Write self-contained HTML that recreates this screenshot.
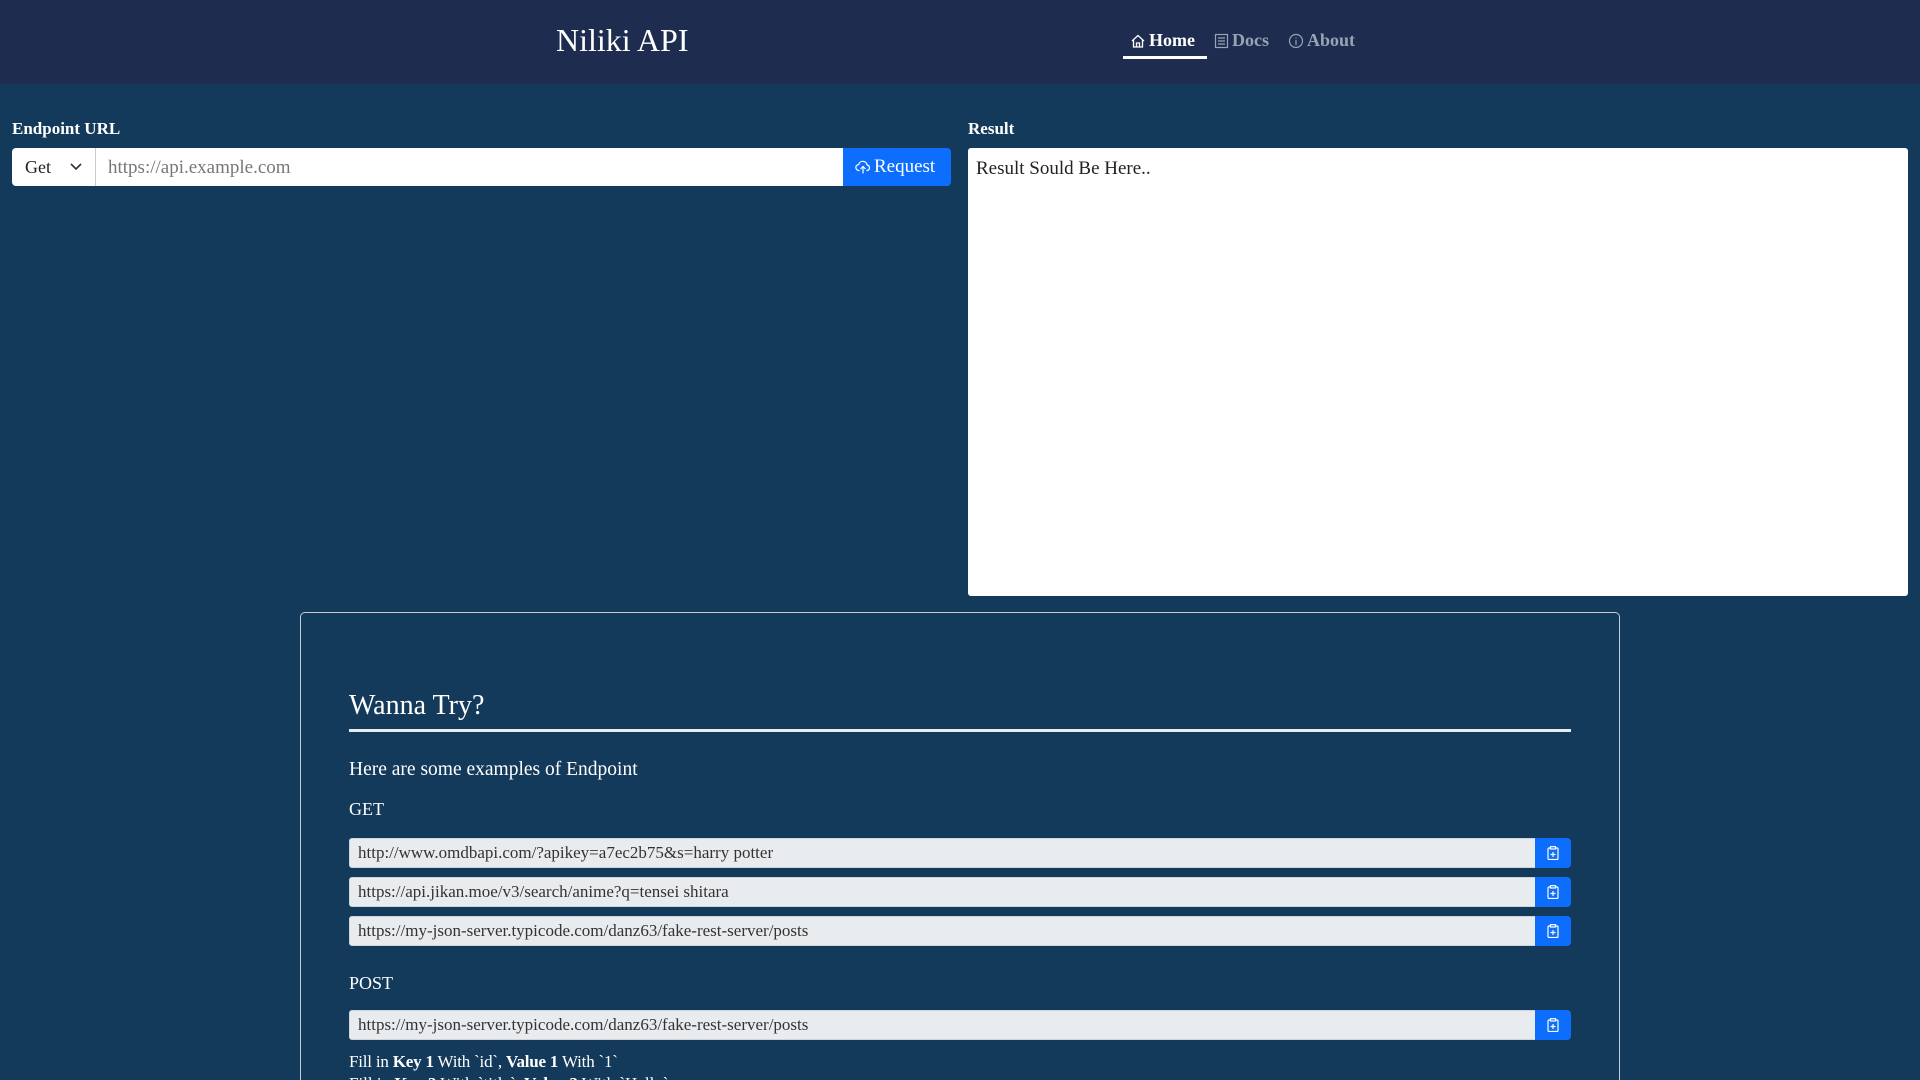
<!DOCTYPE html>
<html><head><meta charset="utf-8"><style>
*{box-sizing:border-box;margin:0;padding:0}
html,body{width:1920px;height:1080px;overflow:hidden}
body{background:#143a5b;font-family:"Liberation Serif","DejaVu Serif",serif;color:#fff;position:relative}
.hdr{position:absolute;left:0;top:0;width:1920px;height:84px;background:#1e2d4f}
.title{position:absolute;left:556px;top:22px;font-size:32px}
.nav{position:absolute;top:30px;font-size:18px;font-weight:bold;display:flex;align-items:center;gap:3px}
.abs{position:absolute}
.lbl{font-size:17px;font-weight:bold}
.inp{background:#e9ecef;border:1px solid #ced4da;color:#333;font-size:17px;height:30px;border-radius:3px 0 0 3px;padding:4px 8px;left:349px;width:1187px}
.cb{background:#0d6efd;left:1535px;width:36px;height:30px;border-radius:0 4px 4px 0;display:flex;align-items:center;justify-content:center}
</style></head><body>
<div class="hdr">
<div class="title">Niliki API</div>
<div class="nav" style="left:1130px;color:#fff"><svg width="16" height="16" viewBox="0 0 16 16" fill="none" stroke="#fff" stroke-width="1.3"><path d="M2 8L8 2.5 14 8M3.5 6.8V14h9V6.8M6.5 14v-4h3v4"/></svg>Home</div>
<div class="abs" style="left:1123px;top:56px;width:84px;height:3px;background:#fff"></div>
<div class="nav" style="left:1214px;color:#9aa3b3"><svg width="15" height="16" viewBox="0 0 15 16" fill="none" stroke="#9aa3b3" stroke-width="1.2"><rect x="1.5" y="1.5" width="12" height="13"/><path d="M4 5h7M4 8h7M4 11h7"/></svg>Docs</div>
<div class="nav" style="left:1288px;color:#9aa3b3"><svg width="16" height="16" viewBox="0 0 16 16" fill="none" stroke="#9aa3b3" stroke-width="1.2"><circle cx="8" cy="8" r="6.5"/><path d="M8 7v5M8 4.5v1"/></svg>About</div>
</div>

<div class="abs lbl" style="left:12px;top:119px">Endpoint URL</div>
<div class="abs" style="left:12px;top:148px;width:84px;height:38px;background:#fff;border-radius:4px 0 0 4px;border-right:1px solid #ccc;color:#222;font-size:18px;padding:9px 13px">Get<svg style="position:absolute;left:58px;top:15px" width="12" height="8" viewBox="0 0 12 8" fill="none" stroke="#333" stroke-width="1.6"><path d="M1 1l5 5 5-5"/></svg></div>
<div class="abs" style="left:96px;top:148px;width:747px;height:38px;background:#fff;color:#777;font-size:19px;padding:9px 12px">https://api.example.com</div>
<div class="abs" style="left:843px;top:148px;width:108px;height:38px;background:#0d6efd;border-radius:0 4px 4px 0;font-size:19px;padding:8px 12px;display:flex;align-items:center;gap:3px"><svg width="16" height="16" viewBox="0 0 16 16" fill="none" stroke="#fff" stroke-width="1.2"><path d="M4.5 11.5H4a3 3 0 0 1-.3-6 4.3 4.3 0 0 1 8.4.5 2.8 2.8 0 0 1 .1 5.5h-.7M8 14.5V7.5M5.5 10L8 7.5 10.5 10"/></svg>Request</div>

<div class="abs lbl" style="left:968px;top:119px">Result</div>
<div class="abs" style="left:968px;top:148px;width:940px;height:448px;background:#fff;border-radius:3px;color:#222;font-size:19px;padding:10px 8px">Result Sould Be Here..</div>

<div class="abs" style="left:300px;top:612px;width:1320px;height:480px;border:1px solid #c8ccd2;border-radius:5px"></div>
<div class="abs" style="left:349px;top:690px;font-size:28px">Wanna Try?</div>
<div class="abs" style="left:349px;top:729px;width:1222px;height:3px;background:#e8ebef"></div>
<div class="abs" style="left:349px;top:759px;font-size:19.5px">Here are some examples of Endpoint</div>
<div class="abs" style="left:349px;top:799px;font-size:18px">GET</div>

<div class="abs inp" style="top:838px">http://www.omdbapi.com/?apikey=a7ec2b75&amp;s=harry potter</div>
<div class="abs cb" style="top:838px"><svg width="12" height="14" viewBox="0 0 12 14" fill="none" stroke="#fff" stroke-width="1.2"><rect x="1" y="2" width="10" height="11.5" rx="1"/><rect x="3.5" y="0.7" width="5" height="2.3" fill="#0d6efd"/><path d="M6 6v5M3.5 8.5h5"/></svg></div>
<div class="abs inp" style="top:877px">https://api.jikan.moe/v3/search/anime?q=tensei shitara</div>
<div class="abs cb" style="top:877px"><svg width="12" height="14" viewBox="0 0 12 14" fill="none" stroke="#fff" stroke-width="1.2"><rect x="1" y="2" width="10" height="11.5" rx="1"/><rect x="3.5" y="0.7" width="5" height="2.3" fill="#0d6efd"/><path d="M6 6v5M3.5 8.5h5"/></svg></div>
<div class="abs inp" style="top:916px">https://my-json-server.typicode.com/danz63/fake-rest-server/posts</div>
<div class="abs cb" style="top:916px"><svg width="12" height="14" viewBox="0 0 12 14" fill="none" stroke="#fff" stroke-width="1.2"><rect x="1" y="2" width="10" height="11.5" rx="1"/><rect x="3.5" y="0.7" width="5" height="2.3" fill="#0d6efd"/><path d="M6 6v5M3.5 8.5h5"/></svg></div>

<div class="abs" style="left:349px;top:973px;font-size:18px">POST</div>
<div class="abs inp" style="top:1010px">https://my-json-server.typicode.com/danz63/fake-rest-server/posts</div>
<div class="abs cb" style="top:1010px"><svg width="12" height="14" viewBox="0 0 12 14" fill="none" stroke="#fff" stroke-width="1.2"><rect x="1" y="2" width="10" height="11.5" rx="1"/><rect x="3.5" y="0.7" width="5" height="2.3" fill="#0d6efd"/><path d="M6 6v5M3.5 8.5h5"/></svg></div>
<div class="abs" style="left:349px;top:1052px;font-size:17px;letter-spacing:-0.2px">Fill in <b>Key 1</b> With `id`, <b>Value 1</b> With `1`</div>
<div class="abs" style="left:349px;top:1074px;font-size:17px">Fill in <b>Key 2</b> With `title`, <b>Value 2</b> With `Hello`</div>
</body></html>
